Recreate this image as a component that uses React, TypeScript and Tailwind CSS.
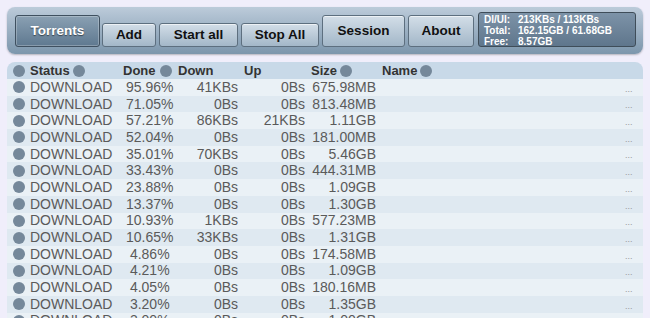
import React from 'react'

const rows = [
  ['95.96%', '41KBs', '0Bs', '675.98MB'],
  ['71.05%', '0Bs', '0Bs', '813.48MB'],
  ['57.21%', '86KBs', '21KBs', '1.11GB'],
  ['52.04%', '0Bs', '0Bs', '181.00MB'],
  ['35.01%', '70KBs', '0Bs', '5.46GB'],
  ['33.43%', '0Bs', '0Bs', '444.31MB'],
  ['23.88%', '0Bs', '0Bs', '1.09GB'],
  ['13.37%', '0Bs', '0Bs', '1.30GB'],
  ['10.93%', '1KBs', '0Bs', '577.23MB'],
  ['10.65%', '33KBs', '0Bs', '1.31GB'],
  [' 4.86%', '0Bs', '0Bs', '174.58MB'],
  [' 4.21%', '0Bs', '0Bs', '1.09GB'],
  [' 4.05%', '0Bs', '0Bs', '180.16MB'],
  [' 3.20%', '0Bs', '0Bs', '1.35GB'],
  [' 3.00%', '0Bs', '0Bs', '1.00GB'],
]

function Dot() {
  return <span className="inline-block w-[12px] h-[12px] rounded-full bg-[#75889a] shrink-0" />
}

function Btn({ label, w, tall }: { label: string; w: string; tall?: boolean }) {
  return (
    <button
      className={`${w} ${tall ? 'h-[32px]' : 'h-[24px]'} rounded-[3px] border border-[#5d6f7f] bg-gradient-to-b from-[#d3dee8] to-[#a3b7c8] shadow-[inset_0_1px_0_rgba(255,255,255,0.6)] text-[13.5px] font-bold text-[#111]`}
    >
      {label}
    </button>
  )
}

export default function App() {
  return (
    <div
      className="w-[650px] h-[318px] overflow-hidden bg-[#f0eefb] pt-[7px]"
      style={{ fontFamily: '"Liberation Sans", Arial, sans-serif' }}
    >
      {/* TOOLBAR */}
      <div className="mx-[7px] h-[47px] rounded-[8px] bg-gradient-to-b from-[#bccbda] to-[#7c96ac] shadow-[0_1px_2px_rgba(0,0,0,0.25)] flex items-end pl-[8px] pb-[7px] gap-[3px]">
        <button className="w-[85px] h-[32px] rounded-[3px] border border-[#3f5060] bg-gradient-to-b from-[#8aa0b3] to-[#5f7990] shadow-[inset_0_0_0_1px_rgba(255,255,255,0.25)] text-[13.5px] font-bold text-white [text-shadow:0_1px_1px_rgba(0,0,0,0.5)] mr-[-1px]">
          Torrents
        </button>
        <Btn label="Add" w="w-[54px]" />
        <Btn label="Start all" w="w-[79px]" />
        <Btn label="Stop All" w="w-[78px]" />
        <Btn label="Session" w="w-[83px]" tall />
        <Btn label="About" w="w-[66px]" tall />
        <div className="w-[158px] h-[35px] ml-[1px] rounded-[3px] border border-[#3f4d59] bg-gradient-to-b from-[#7d93a8] to-[#5f768c] px-[5px] pt-[1px] text-[10px] leading-[11px] font-bold text-white">
          <div className="flex"><span className="w-[34px]">Dl/Ul:</span><span>213KBs / 113KBs</span></div>
          <div className="flex"><span className="w-[34px]">Total:</span><span>162.15GB / 61.68GB</span></div>
          <div className="flex"><span className="w-[34px]">Free:</span><span>8.57GB</span></div>
        </div>
      </div>

      {/* TABLE */}
      <div className="mx-[7px] mt-[8px] text-[#5a5a5a]">
        <div className="flex items-center h-[17px] bg-[#c8d9e8] rounded-t-[8px] text-[13px] font-bold text-[#333]">
          <div className="w-[113px] flex items-center pl-[6px]">
            <Dot />
            <span className="ml-[5px]">Status</span>
            <span className="ml-[3px] flex"><Dot /></span>
          </div>
          <div className="w-[58px] flex items-center pl-[3px]">
            <span>Done</span>
            <span className="ml-[4px] flex"><Dot /></span>
          </div>
          <div className="w-[66px]">Down</div>
          <div className="w-[67px]">Up</div>
          <div className="w-[71px] flex items-center">
            <span>Size</span>
            <span className="ml-[3px] flex"><Dot /></span>
          </div>
          <div className="flex items-center">
            <span>Name</span>
            <span className="ml-[3px] flex"><Dot /></span>
          </div>
        </div>
        {rows.map((r, i) => (
          <div
            key={i}
            className={`flex items-center h-[16.7px] text-[14px] ${i % 2 === 0 ? 'bg-[#eaf1f6]' : 'bg-[#dfe9f1]'}`}
          >
            <div className="w-[113px] flex items-center pl-[6px]">
              <Dot />
              <span className="ml-[5px]">DOWNLOAD</span>
            </div>
            <div className="w-[58px] pl-[6px] whitespace-pre">{r[0]}</div>
            <div className="w-[60px] text-right">{r[1]}</div>
            <div className="w-[67px] text-right">{r[2]}</div>
            <div className="w-[71px] text-right">{r[3]}</div>
            <div className="flex-1" />
            <div className="w-[22px] pl-[4px] text-[9px] text-[#999] self-end leading-[14px]">...</div>
          </div>
        ))}
      </div>
    </div>
  )
}
